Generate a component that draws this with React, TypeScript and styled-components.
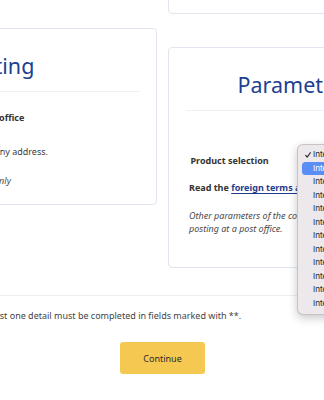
import React from "react";
import styled, { createGlobalStyle } from "styled-components";

const GlobalStyle = createGlobalStyle`
  html,
  body {
    margin: 0;
    padding: 0;
    background: #fff;
    overflow: hidden;
  }

  body {
    font-family: "Noto Sans", "Open Sans", sans-serif;
    color: #3b3b3b;
  }
`;

const Viewport = styled.div`
  width: 324px;
  height: 400px;
  overflow: hidden;
`;

// the screenshot is a scrolled crop of a wider page
const Page = styled.div`
  position: relative;
  width: 813px;
  margin: -60px 0 0 -244px;
`;

const Columns = styled.div`
  display: grid;
  grid-template-columns: 401px 401px;
  column-gap: 11px;
  align-items: start;
`;

const Column = styled.div`
  display: flex;
  flex-direction: column;
  gap: 33px;
`;

const Card = styled.section<{ $height?: number }>`
  box-sizing: border-box;
  border: 1px solid #e1e6ee;
  border-radius: 4px;
  background: #fff;
  padding: 22px 17px 0;
  height: ${(p) => (p.$height ? `${p.$height}px` : "auto")};
`;

const CardTitle = styled.h2`
  margin: 0;
  font-size: 21.5px;
  line-height: 30px;
  font-weight: 400;
  text-align: center;
  color: #213f8f;
  white-space: nowrap;
`;

const Divider = styled.div`
  height: 1px;
  margin-top: 9.5px;
  background: #edf0f4;
`;

const CardBody = styled.div<{ $bottom: number }>`
  padding: 0 3px ${(p) => p.$bottom}px;
  font-size: 9px;
  line-height: 14px;
  white-space: nowrap;
`;

const OptionTitle = styled.div`
  margin-top: 19px;
  font-weight: 700;
  color: #333;
`;

const OptionText = styled.div`
  margin-top: 20px;
`;

const OptionNote = styled.div`
  margin-top: 15px;
  font-style: italic;
  color: #4a4a4a;
`;

const ProductRow = styled.div`
  position: relative;
  display: flex;
  align-items: center;
  gap: 30px;
  height: 18px;
  margin-top: 41px;
`;

const FieldLabel = styled.label`
  margin-left: 1.5px;
  font-weight: 700;
  color: #333;
`;

const SelectBox = styled.div`
  width: 150px;
  height: 18px;
  border: 1px solid #c9ced6;
  border-radius: 3px;
  box-sizing: border-box;
`;

const TermsLine = styled.div`
  margin-top: 11.3px;
  font-weight: 700;
  color: #333;
`;

const TermsLink = styled.a`
  color: #1f3b8c;
  text-decoration: underline;
  text-underline-offset: 1.5px;
`;

const Hint = styled.p`
  margin: 14px 0 0;
  font-style: italic;
  line-height: 13.3px;
  color: #4a4a4a;
`;

const Popup = styled.ul`
  position: absolute;
  left: 108.3px;
  top: -7.2px;
  width: 170px;
  margin: 0;
  padding: 3px 0 4px;
  list-style: none;
  background: #ece8ec;
  border: 0.5px solid rgba(0, 0, 0, 0.16);
  border-radius: 6px;
  box-shadow: 0 3px 10px rgba(0, 0, 0, 0.22);
  font-family: Inter, "Liberation Sans", sans-serif;
  font-size: 8.2px;
`;

const PopupItem = styled.li<{ $active?: boolean }>`
  position: relative;
  height: 13.5px;
  line-height: 13.5px;
  margin: 0 4px;
  padding-left: 10.7px;
  border-radius: 3.5px;
  white-space: nowrap;
  color: ${(p) => (p.$active ? "#fff" : "#262626")};
  background: ${(p) => (p.$active ? "#5b8ef4" : "transparent")};
`;

const Check = styled.svg`
  position: absolute;
  left: 2.3px;
  top: 4px;
`;

const Footer = styled.footer`
  margin-top: 27px;
  border-top: 1px solid #eceef2;
`;

const Note = styled.p`
  width: 373px;
  margin: 12.5px auto 0;
  font-size: 9px;
  line-height: 14px;
  color: #444;
  white-space: nowrap;
`;

const Actions = styled.div`
  display: flex;
  justify-content: center;
  margin-top: 19.5px;
`;

const ContinueButton = styled.button`
  width: 85px;
  height: 32px;
  border: none;
  border-radius: 3px;
  background: #f5c951;
  font-family: "Noto Sans", "Open Sans", sans-serif;
  font-size: 9px;
  color: #2b2b2b;
  cursor: pointer;
`;

const products = [
  "International letter",
  "International registered letter",
  "International parcel",
  "International standard parcel",
  "International business parcel",
  "International EMS",
  "International printed matter",
  "International small packet",
  "International M-bag",
  "International tracked letter",
  "International insured letter",
  "International insured parcel",
];

export default function App() {
  return (
    <Viewport>
      <GlobalStyle />
      <Page>
        <Columns>
          <Column>
            <Card $height={55} />
            <Card>
              <CardTitle>Type of posting</CardTitle>
              <Divider />
              <CardBody $bottom={16}>
                <OptionTitle>Handing over the consignment at any Czech Post office</OptionTitle>
                <OptionText>A courier will pick up the consignment from almost any address.</OptionText>
                <OptionNote>Available for selected domestic and overseas products only</OptionNote>
              </CardBody>
            </Card>
          </Column>
          <Column>
            <Card $height={74} />
            <Card>
              <CardTitle>Parameters of your parcel</CardTitle>
              <Divider />
              <CardBody $bottom={32}>
                <ProductRow>
                  <FieldLabel>Product selection</FieldLabel>
                  <SelectBox />
                  <Popup>
                    {products.map((name, i) => (
                      <PopupItem key={name} $active={i === 1}>
                        {i === 0 && (
                          <Check width="6" height="6" viewBox="0 0 6 6">
                            <path
                              d="M0.7 3.3 L2.2 5.1 L5.3 0.7"
                              fill="none"
                              stroke="#262626"
                              strokeWidth="1.1"
                              strokeLinecap="round"
                              strokeLinejoin="round"
                            />
                          </Check>
                        )}
                        {name}
                      </PopupItem>
                    ))}
                  </Popup>
                </ProductRow>
                <TermsLine>
                  Read the <TermsLink href="#">foreign terms and conditions</TermsLink>
                </TermsLine>
                <Hint>
                  Other parameters of the consignment can be set after choosing
                  <br />
                  posting at a post office.
                </Hint>
              </CardBody>
            </Card>
          </Column>
        </Columns>
        <Footer>
          <Note>At least one detail must be completed in fields marked with **.</Note>
          <Actions>
            <ContinueButton>Continue</ContinueButton>
          </Actions>
        </Footer>
      </Page>
    </Viewport>
  );
}
